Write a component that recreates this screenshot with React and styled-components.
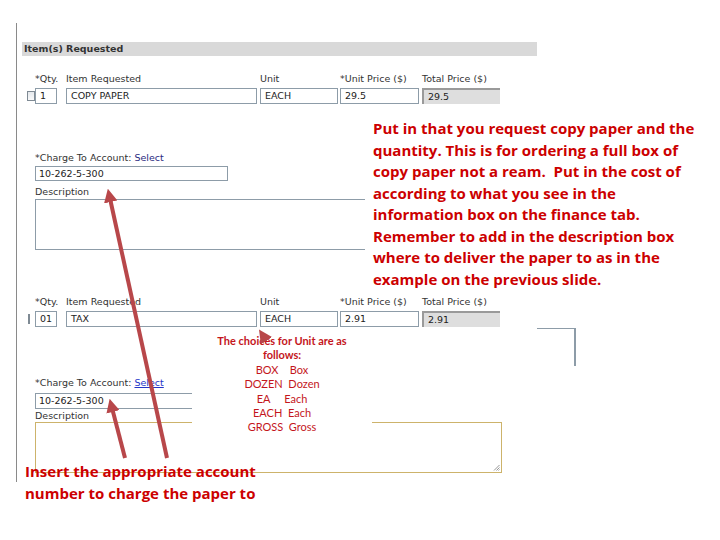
import React from 'react'
import styled, { createGlobalStyle } from 'styled-components'

const GlobalStyle = createGlobalStyle`
    html, body {
        margin: 0;
        padding: 0;
        background: #ffffff;
    }
    body {
        font-family: "DejaVu Sans", Verdana, sans-serif;
    }
`

const ROW_COLUMNS = [
    { key: 'qty', label: '*Qty.', width: 22, gap: 0 },
    { key: 'item', label: 'Item Requested', width: 191, gap: 9 },
    { key: 'unit', label: 'Unit', width: 78, gap: 3 },
    { key: 'price', label: '*Unit Price ($)', width: 79, gap: 2 },
    { key: 'total', label: 'Total Price ($)', width: 78, gap: 3, readOnly: true }
]

const ITEMS = [
    {
        values: { qty: '1', item: 'COPY PAPER', unit: 'EACH', price: '29.5', total: '29.5' },
        account: '10-262-5-300',
        focused: false,
        partialCheck: false,
        underlineSelect: false
    },
    {
        values: { qty: '01', item: 'TAX', unit: 'EACH', price: '2.91', total: '2.91' },
        account: '10-262-5-300',
        focused: true,
        partialCheck: true,
        underlineSelect: true
    }
]

const NOTE_LINES = [
    'Put in that you request copy paper and the',
    'quantity. This is for ordering a full box of',
    'copy paper not a ream.\u00a0 Put in the cost of',
    'according to what you see in the',
    'information box on the finance tab.',
    'Remember to add in the description box',
    'where to deliver the paper to as in the',
    'example on the previous slide.'
]

export default function App() {
    return (
        <Page>
            <GlobalStyle />
            <Panel>
                <SectionHeader>Item(s) Requested</SectionHeader>
                {ITEMS.map((item, i) => (
                    <ItemBlock key={i} first={i === 0}>
                        <FieldsRow>
                            <CheckCell>
                                <CheckBox partial={item.partialCheck} />
                            </CheckCell>
                            {ROW_COLUMNS.map(col => (
                                <Field key={col.key} style={{ width: col.width, marginLeft: col.gap }}>
                                    <FieldLabel>{col.label}</FieldLabel>
                                    <TextBox readOnly={col.readOnly}>{item.values[col.key]}</TextBox>
                                </Field>
                            ))}
                        </FieldsRow>
                        <AccountArea first={i === 0}>
                            <FieldLabel>
                                *Charge To Account: <SelectLink underline={item.underlineSelect}>Select</SelectLink>
                            </FieldLabel>
                            <AccountBox first={i === 0}>{item.account}</AccountBox>
                            <DescLabel first={i === 0}>Description</DescLabel>
                            <DescBox first={i === 0} focused={item.focused}>
                                <ResizeGrip width="7" height="7" viewBox="0 0 7 7">
                                    <path d="M6.5 1 L1 6.5 M6.5 3.5 L3.5 6.5 M6.5 5.5 L5.5 6.5" stroke="#8a8a8a" strokeWidth="0.9" />
                                </ResizeGrip>
                            </DescBox>
                        </AccountArea>
                    </ItemBlock>
                ))}
            </Panel>

            <PanelCorner />

            <NoteBox>
                {NOTE_LINES.map(line => (
                    <div key={line}>{line}</div>
                ))}
            </NoteBox>

            <ChoicesBox>
                <ChoicesTitle>The choices for Unit are as follows:</ChoicesTitle>
                <ChoiceLine>BOX&nbsp;&nbsp;&nbsp; Box</ChoiceLine>
                <ChoiceLine>DOZEN&nbsp; Dozen</ChoiceLine>
                <ChoiceLine>EA&nbsp;&nbsp;&nbsp;&nbsp; Each</ChoiceLine>
                <ChoiceLine>EACH&nbsp; Each</ChoiceLine>
                <ChoiceLine>GROSS&nbsp; Gross</ChoiceLine>
            </ChoicesBox>

            <AccountNote>
                Insert the appropriate account<br />
                number to charge the paper to
            </AccountNote>

            <ArrowLayer width="720" height="540" viewBox="0 0 720 540">
                <defs>
                    <marker id="head" viewBox="0 0 10 10" refX="6" refY="5" markerWidth="3.4" markerHeight="3.4" orient="auto-start-reverse">
                        <path d="M0 0 L10 5 L0 10 Z" fill="#b8474a" />
                    </marker>
                </defs>
                <line x1="167" y1="458" x2="109" y2="194" stroke="#b8474a" strokeWidth="4" markerEnd="url(#head)" />
                <line x1="125" y1="458" x2="111" y2="404" stroke="#b8474a" strokeWidth="4" markerEnd="url(#head)" />
                <line x1="266" y1="340" x2="262" y2="334" stroke="#b8474a" strokeWidth="4" markerEnd="url(#head)" />
            </ArrowLayer>
        </Page>
    )
}

const Page = styled.div`
    position: relative;
    width: 720px;
    height: 540px;
    overflow: hidden;
    background: #ffffff;
    padding-top: 23px;
    box-sizing: border-box;
`

const Panel = styled.div`
    margin-left: 16px;
    width: 521px;
    height: 459px;
    box-sizing: border-box;
    border-left: 1px solid #8a8a8a;
    padding: 19px 0 0 5px;
    color: #3a3a3a;
    font-size: 9.5px;
`

const SectionHeader = styled.div`
    height: 14px;
    line-height: 14px;
    background: #d9d9d9;
    padding-left: 2px;
    font-weight: bold;
    color: #333;
    font-size: 9.5px;
`

const ItemBlock = styled.div`
    padding-left: 5px;
    margin-top: ${p => (p.first ? '17px' : '46px')};
`

const FieldsRow = styled.div`
    display: flex;
    align-items: flex-end;
`

const CheckCell = styled.div`
    width: 8px;
    height: 16px;
    display: flex;
    align-items: center;
`

const CheckBox = styled.span`
    display: block;
    box-sizing: border-box;
    width: ${p => (p.partial ? '2px' : '8px')};
    height: 10px;
    margin-left: ${p => (p.partial ? '1px' : '0')};
    border: 1px solid #7f8a94;
    background: ${p => (p.partial ? '#6f7780' : 'linear-gradient(#e4e8ec, #f8f9fa)')};
`

const Field = styled.div`
    display: flex;
    flex-direction: column;
`

const FieldLabel = styled.div`
    height: 11px;
    line-height: 11px;
    white-space: nowrap;
    color: #333;
    font-size: 9.5px;
`

const TextBox = styled.div`
    margin-top: 4px;
    height: 16px;
    box-sizing: border-box;
    border: 1px solid #8d9ca8;
    border-top-color: ${p => (p.readOnly ? '#9a9a9a' : '#8d9ca8')};
    border-left-color: ${p => (p.readOnly ? '#9a9a9a' : '#8d9ca8')};
    border-width: ${p => (p.readOnly ? '2px 0 0 2px' : '1px')};
    background: ${p => (p.readOnly ? '#dedede' : '#ffffff')};
    padding-left: 4px;
    line-height: 14px;
    white-space: nowrap;
    overflow: hidden;
    color: #222;
`

const AccountArea = styled.div`
    padding-left: 8px;
    margin-top: ${p => (p.first ? '48px' : '50px')};
    display: flex;
    flex-direction: column;
    align-items: flex-start;
`

const SelectLink = styled.span`
    color: ${p => (p.underline ? '#2436c8' : '#2a2a80')};
    text-decoration: ${p => (p.underline ? 'underline' : 'none')};
`

const AccountBox = styled.div`
    margin-top: ${p => (p.first ? '3px' : '5px')};
    width: 193px;
    height: ${p => (p.first ? '15px' : '16px')};
    box-sizing: border-box;
    border: 1px solid #8d9ca8;
    padding-left: 3px;
    line-height: 13px;
    color: #222;
`

const DescLabel = styled(FieldLabel)`
    margin-top: ${p => (p.first ? '5px' : '1px')};
`

const DescBox = styled.div`
    position: relative;
    margin-top: ${p => (p.first ? '2px' : '1px')};
    width: 467px;
    height: 51px;
    box-sizing: border-box;
    border: 1px solid ${p => (p.focused ? '#cdb36b' : '#8d9ca8')};
    background: #ffffff;
`

const ResizeGrip = styled.svg`
    position: absolute;
    right: 1px;
    bottom: 1px;
`

const PanelCorner = styled.div`
    position: absolute;
    left: 537px;
    top: 328px;
    width: 37px;
    height: 37px;
    border-top: 1px solid #8d9ca8;
    border-right: 2px solid #8d9ca8;
`

const Annotation = styled.div`
    position: absolute;
    color: #cc0000;
    font-family: "Open Sans", Lato, sans-serif;
    font-weight: 700;
    white-space: nowrap;
`

const NoteBox = styled(Annotation)`
    left: 365px;
    top: 112px;
    width: 335px;
    height: 180px;
    box-sizing: border-box;
    padding: 6px 0 0 8px;
    background: #ffffff;
    font-size: 15px;
    line-height: 21.5px;
`

const ChoicesBox = styled(Annotation)`
    left: 192px;
    top: 330px;
    width: 180px;
    height: 106px;
    box-sizing: border-box;
    padding-top: 4px;
    background: #ffffff;
    text-align: center;
    white-space: normal;
    color: #c4161c;
    font-family: Lato, "Open Sans", sans-serif;
    font-size: 11px;
    line-height: 14.4px;
`

const ChoicesTitle = styled.div`
    width: 140px;
    margin: 0 auto;
    font-weight: 700;
`

const ChoiceLine = styled.div`
    font-weight: 400;
`

const AccountNote = styled(Annotation)`
    left: 25px;
    top: 460px;
    font-size: 15px;
    line-height: 22px;
`

const ArrowLayer = styled.svg`
    position: absolute;
    left: 0;
    top: 0;
    pointer-events: none;
`
